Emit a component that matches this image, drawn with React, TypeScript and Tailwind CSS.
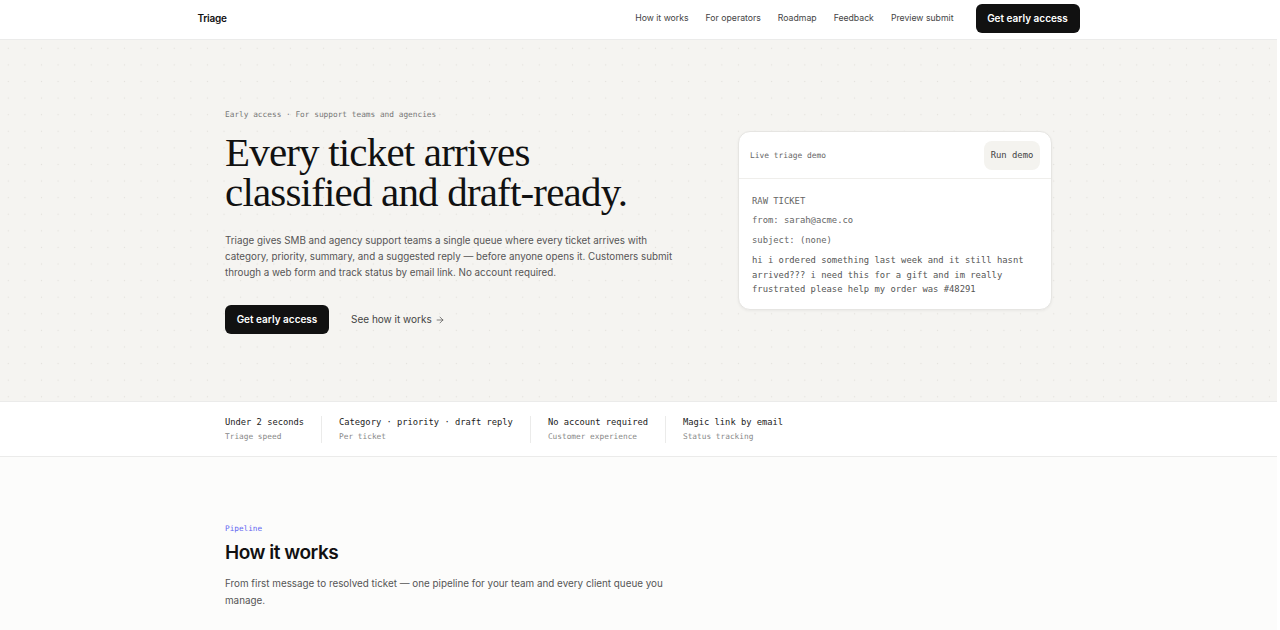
import { ArrowRight } from "lucide-react";

const sans = "font-['Inter',_'Noto_Sans',_sans-serif]";
const mono = "font-['DejaVu_Sans_Mono',_'Liberation_Mono',_monospace]";
const serif = "font-['Liberation_Serif',_'DejaVu_Serif',_serif]";

const navLinks = ["How it works", "For operators", "Roadmap", "Feedback", "Preview submit"];

const stats = [
  { value: "Under 2 seconds", label: "Triage speed" },
  { value: "Category · priority · draft reply", label: "Per ticket" },
  { value: "No account required", label: "Customer experience" },
  { value: "Magic link by email", label: "Status tracking" },
];

function Nav() {
  return (
    <header className="h-10 border-b border-[#ebebea] bg-white">
      <div className="mx-auto flex h-full max-w-[882px] items-center justify-between pb-[2px]">
        <span className="text-[10px] font-semibold tracking-tight text-[#111]">Triage</span>
        <nav className="flex items-center">
          <div className="flex items-center gap-[17px]">
            {navLinks.map((link) => (
              <a key={link} href="#" className="text-[8.7px] text-[#444]">
                {link}
              </a>
            ))}
          </div>
          <a
            href="#"
            className="ml-[22px] flex h-[29px] w-[104px] items-center justify-center rounded-[6px] bg-[#111] text-[10px] font-semibold text-white"
          >
            Get early access
          </a>
        </nav>
      </div>
    </header>
  );
}

function DemoCard() {
  return (
    <div className="w-[314px] rounded-[12px] border border-[#e6e5e2] bg-white shadow-[0_1px_3px_rgba(0,0,0,0.05)]">
      <div className="flex h-[47px] items-center justify-between border-b border-[#efeeeb] pl-[11px] pr-[11px]">
        <span className={`${mono} pt-[2px] text-[7.9px] text-[#666]`}>Live triage demo</span>
        <button
          type="button"
          className={`${mono} flex h-[29px] w-[56px] items-center justify-center rounded-[8px] bg-[#f4f3ef] text-[8.9px] text-[#444]`}
        >
          Run demo
        </button>
      </div>
      <div className={`${mono} px-[13px] pb-[12px] pt-[15px] text-[8.85px] text-[#666]`}>
        <p className="leading-[14px]">RAW TICKET</p>
        <p className="mt-[5px] leading-[14px]">from: sarah@acme.co</p>
        <p className="mt-[6px] leading-[14px]">subject: (none)</p>
        <p className="mt-[6px] leading-[14.5px] text-[#555]">
          hi i ordered something last week and it still hasnt arrived??? i need this for a gift and im
          really frustrated please help my order was #48291
        </p>
      </div>
    </div>
  );
}

function Hero() {
  return (
    <section className="h-[361px] bg-[#f5f4f1] bg-[radial-gradient(circle,_#e3e1dc_0.8px,_transparent_1px)] bg-[size:16.6px_16.6px]">
      <div className="mx-auto grid h-full max-w-[827px] grid-cols-[450px_1fr] items-center">
        <div className="pt-[2px]">
          <p className={`${mono} text-[7.8px] text-[#777]`}>
            Early access · For support teams and agencies
          </p>
          <h1
            className={`${serif} mt-[12px] text-[41px] leading-[40px] tracking-[-0.02em] text-[#111]`}
          >
            Every ticket arrives
            <br />
            classified and draft-ready.
          </h1>
          <p className={`${sans} mt-[21px] text-[9.8px] leading-[16px] text-[#555]`}>
            Triage gives SMB and agency support teams a single queue where every ticket arrives with
            category, priority, summary, and a suggested reply — before anyone opens it. Customers
            submit through a web form and track status by email link. No account required.
          </p>
          <div className="mt-[24px] flex items-center gap-[22px]">
            <a
              href="#"
              className={`${sans} flex h-[29px] w-[104px] items-center justify-center rounded-[6px] bg-[#111] text-[10px] font-semibold text-white`}
            >
              Get early access
            </a>
            <a href="#" className={`${sans} flex items-center gap-[3px] text-[10px] text-[#444]`}>
              See how it works
              <ArrowRight className="h-[10px] w-[10px]" strokeWidth={1.6} />
            </a>
          </div>
        </div>
        <div className="flex justify-end">
          <DemoCard />
        </div>
      </div>
    </section>
  );
}

function Stats() {
  return (
    <section className="h-[56px] border-y border-[#ebebea] bg-white">
      <div className="mx-auto flex h-full max-w-[827px] items-center">
        {stats.map((s, i) => (
          <div
            key={s.value}
            className={
              i === 0
                ? "pr-[17px]"
                : "border-l border-[#ebebea] pl-[17px] pr-[17px]"
            }
          >
            <p className={`${mono} text-[8.75px] leading-[13px] text-[#222]`}>{s.value}</p>
            <p className={`${mono} mt-[1px] text-[7.8px] leading-[13px] text-[#888]`}>{s.label}</p>
          </div>
        ))}
      </div>
    </section>
  );
}

function HowItWorks() {
  return (
    <section className="bg-[#fcfcfb] pb-[40px] pt-[66px]">
      <div className="mx-auto max-w-[827px]">
        <p className={`${mono} text-[7.7px] text-[#6366f1]`}>Pipeline</p>
        <h2 className={`${sans} mt-[4px] text-[19px] font-semibold tracking-tight text-[#111]`}>
          How it works
        </h2>
        <p className={`${sans} mt-[8px] max-w-[460px] text-[9.85px] leading-[17px] text-[#555]`}>
          From first message to resolved ticket — one pipeline for your team and every client queue
          you manage.
        </p>
      </div>
    </section>
  );
}

export default function App() {
  return (
    <div className={`${sans} min-h-screen w-[calc(100%-3px)] bg-[#fcfcfb]`}>
      <Nav />
      <Hero />
      <Stats />
      <HowItWorks />
    </div>
  );
}
